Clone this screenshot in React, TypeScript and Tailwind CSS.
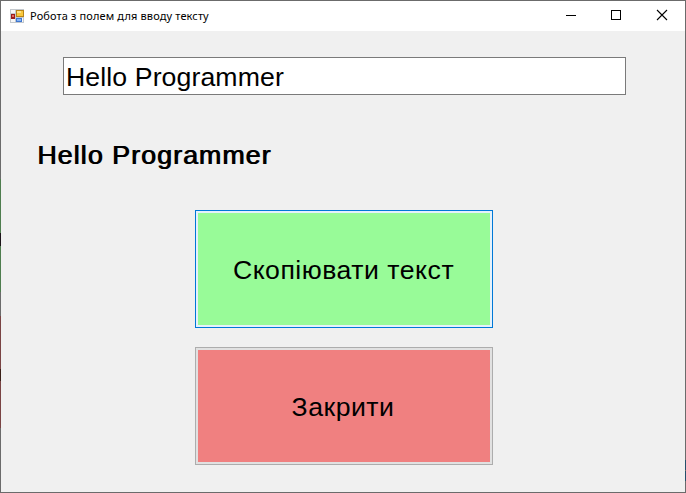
import { useState } from "react";

function AppIcon() {
  return (
    <svg width="15" height="15" viewBox="0 0 15 15" shapeRendering="crispEdges" aria-hidden="true">
      <rect x="0" y="0" width="14" height="14" fill="#c3c8cd" />
      <rect x="1" y="1" width="4" height="3" fill="#f7f7f7" />
      <rect x="1" y="10" width="4" height="3" fill="#f7f7f7" />
      <rect x="12" y="9" width="1" height="4" fill="#f7f7f7" />
      <rect x="6" y="1" width="8" height="7" fill="#b88418" />
      <rect x="7" y="2" width="6" height="5" fill="#f9c83c" />
      <rect x="7" y="2" width="4" height="2" fill="#fde28a" />
      <rect x="1" y="5" width="4" height="5" fill="#9a1c1c" />
      <rect x="2" y="6" width="2" height="2" fill="#e66a60" />
      <rect x="6" y="9" width="6" height="4" fill="#3f76cf" />
      <rect x="7" y="10" width="4" height="2" fill="#85b4f5" />
    </svg>
  );
}

function TitleBar() {
  return (
    <header className="flex h-[30px] shrink-0 items-center bg-white pl-[9px]">
      <AppIcon />
      <h1 className="ml-[5px] flex-1 whitespace-nowrap font-['Noto_Sans','Open_Sans',sans-serif] text-[11px] leading-[28px] tracking-[0.13px] text-black">
        Робота з полем для вводу тексту
      </h1>
      <div className="flex h-full">
        <button aria-label="Згорнути" className="flex w-[46px] justify-center">
          <svg width="46" height="30" shapeRendering="crispEdges">
            <rect x="18" y="14" width="10" height="1" fill="#000" />
          </svg>
        </button>
        <button aria-label="Розгорнути" className="flex w-[45px] justify-center">
          <svg width="45" height="30" shapeRendering="crispEdges">
            <rect x="17.5" y="9.5" width="9" height="9" fill="none" stroke="#000" />
          </svg>
        </button>
        <button aria-label="Закрити вікно" className="flex w-[46px] justify-center">
          <svg width="46" height="30">
            <path d="M18 9l10 10M28 9l-10 10" stroke="#000" strokeWidth="1.1" />
          </svg>
        </button>
      </div>
    </header>
  );
}

export default function App() {
  const [text, setText] = useState("Hello Programmer");
  const [label, setLabel] = useState("Hello Programmer");

  return (
    <div className="flex h-[493px] w-[686px] overflow-hidden bg-[#f0f0f0] font-['Liberation_Sans',Arial,sans-serif] text-black">
      <div className="flex w-px shrink-0 flex-col bg-[#6b6b6b]">
        <i className="mt-[179px] h-[54px] bg-[#4f7d4f]" />
        <i className="h-[13px] bg-[#1c1419]" />
        <i className="h-[46px] bg-[#4f7d4f]" />
        <i className="mt-[24px] h-[53px] bg-[#7a4444]" />
        <i className="h-[12px] bg-[#3a2018]" />
        <i className="h-[47px] bg-[#7a4444]" />
      </div>
      <div className="flex min-w-0 flex-1 flex-col border-y border-[#6b6b6b]">
        <TitleBar />
        <main className="flex flex-1 flex-col">
          <input
            value={text}
            onChange={(e) => setText(e.target.value)}
            className="ml-[62px] mt-[26px] h-[38px] w-[563px] border border-[#7a7a7a] bg-white pl-[2px] pt-[2px] text-[26.67px] leading-[34px] tracking-[0.1px] outline-none"
          />
          <p className="ml-[36px] mt-[40px] h-[40px] whitespace-nowrap text-[26.67px] leading-[40px] tracking-[1.12px] [text-shadow:1px_0_0_#000]">
            {label}
          </p>
          <button
            onClick={() => setLabel(text)}
            className="ml-[194px] mt-[35px] h-[118px] w-[298px] border border-[#0078d7] bg-[#e5f1fb] p-[2px] text-[26.67px] tracking-[0.5px]"
          >
            <span className="flex h-full items-center justify-center bg-[#98fb98] pr-px pt-[2px]">Скопіювати текст</span>
          </button>
          <button className="ml-[194px] mt-[19px] h-[118px] w-[298px] border border-[#adadad] bg-[#e1e1e1] p-[2px] text-[26.67px] tracking-[0.5px]">
            <span className="flex h-full items-center justify-center bg-[#f08080] pr-[2px] pt-[2px]">Закрити</span>
          </button>
        </main>
      </div>
      <div className="flex w-px shrink-0 flex-col bg-[#6b6b6b]">
        <i className="mt-[460px] h-[10px] bg-[#244f6b]" />
        <i className="mt-px h-[10px] bg-[#244f6b]" />
      </div>
    </div>
  );
}
